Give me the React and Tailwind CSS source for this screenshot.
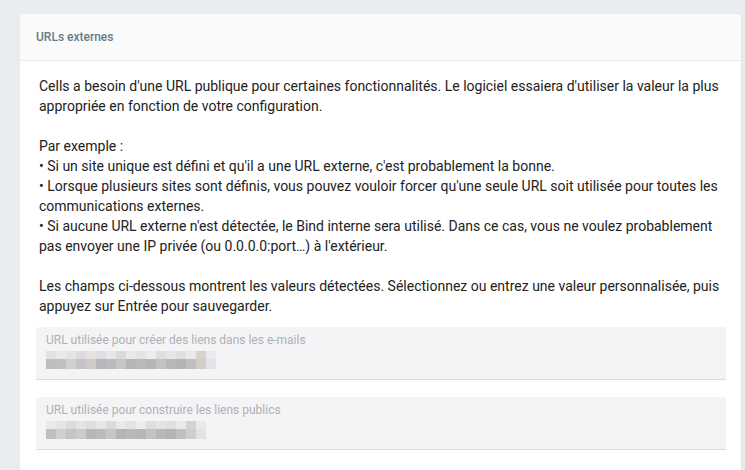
import React from "react";

const intro = [
  "Cells a besoin d'une URL publique pour certaines fonctionnalités. Le logiciel essaiera d'utiliser la valeur la plus appropriée en fonction de votre configuration.",
];

const blurTop = [
  "bg-[#e2e2e4]", "bg-[#eaeaec]", "bg-[#e4e4e6]", "bg-[#dcdcde]", "bg-[#e6e3e2]", "bg-[#dddee1]", "bg-[#e7e7e9]",
  "bg-[#dadadc]", "bg-[#e9e9ea]", "bg-[#e3e3e5]", "bg-[#ececee]", "bg-[#dededf]", "bg-[#e5e5e7]", "bg-[#e0e0e2]",
  "bg-[#e9e9eb]", "bg-[#d6d2cf]", "bg-[#e8eaee]",
];
const blurBottom = [
  "bg-[#bdbdc0]", "bg-[#c0c0c3]", "bg-[#cfcfd1]", "bg-[#c4c4c7]", "bg-[#d0cac6]", "bg-[#b7b7bb]", "bg-[#bbbbbe]",
  "bg-[#c6c6c8]", "bg-[#b5b5b8]", "bg-[#b9b9bc]", "bg-[#b6b6b9]", "bg-[#c3c3c5]", "bg-[#b8b8bb]", "bg-[#b4b4b7]",
  "bg-[#bfbfc2]", "bg-[#d3cdc8]", "bg-[#e1e3e7]",
];

const Blurred = ({ count }) => (
  <div className="mt-[4px] flex flex-col">
    <div className="flex h-[8px]">
      {blurTop.slice(blurTop.length - count).map((c, i) => (
        <div key={i} className={`w-[10px] ${c}`} />
      ))}
    </div>
    <div className="flex h-[10px]">
      {blurBottom.slice(blurBottom.length - count).map((c, i) => (
        <div key={i} className={`w-[10px] ${c}`} />
      ))}
    </div>
  </div>
);

const Field = ({ label, count }) => (
  <div className="h-[53px] rounded-t-[3px] bg-[#f4f4f6] border-b border-[#dcdcdf] pl-[10px] pt-[6px]">
    <div className="text-[12px] leading-[14px] text-[#b0b0b4]">{label}</div>
    <Blurred count={count} />
  </div>
);

export default function App() {
  return (
    <div className="w-[745px] h-[470px] overflow-hidden bg-[#e9edf0] pt-[14px] pl-[20px] pr-[3px] font-['Roboto',sans-serif]">
      <div className="h-full bg-white rounded-t-[4px] border-r border-[#e3e6e8] shadow-[0_0_1px_rgba(0,0,0,0.12)]">
        <div className="h-[47px] bg-[#fafafa] border-b border-[#e6e8ea] rounded-t-[4px] flex items-center pl-[16px]">
          <span className="text-[12px] font-medium text-[#667b87]">URLs externes</span>
        </div>
        <div className="px-[16px] pt-[15px]">
          <div className="px-[3px] text-[14px] leading-[20px] text-[#222]">
            {intro.map((t, i) => (
              <p key={i}>{t}</p>
            ))}
            <p className="mt-[20px]">Par exemple :</p>
            <p>• Si un site unique est défini et qu'il a une URL externe, c'est probablement la bonne.</p>
            <p>• Lorsque plusieurs sites sont définis, vous pouvez vouloir forcer qu'une seule URL soit utilisée pour toutes les communications externes.</p>
            <p>• Si aucune URL externe n'est détectée, le Bind interne sera utilisé. Dans ce cas, vous ne voulez probablement pas envoyer une IP privée (ou 0.0.0.0:port…) à l'extérieur.</p>
            <p className="mt-[20px]">Les champs ci-dessous montrent les valeurs détectées. Sélectionnez ou entrez une valeur personnalisée, puis appuyez sur Entrée pour sauvegarder.</p>
          </div>
          <div className="mt-[11px] flex flex-col gap-[17px] w-[690px]">
            <Field label="URL utilisée pour créer des liens dans les e-mails" count={17} />
            <Field label="URL utilisée pour construire les liens publics" count={16} />
          </div>
        </div>
      </div>
    </div>
  );
}
